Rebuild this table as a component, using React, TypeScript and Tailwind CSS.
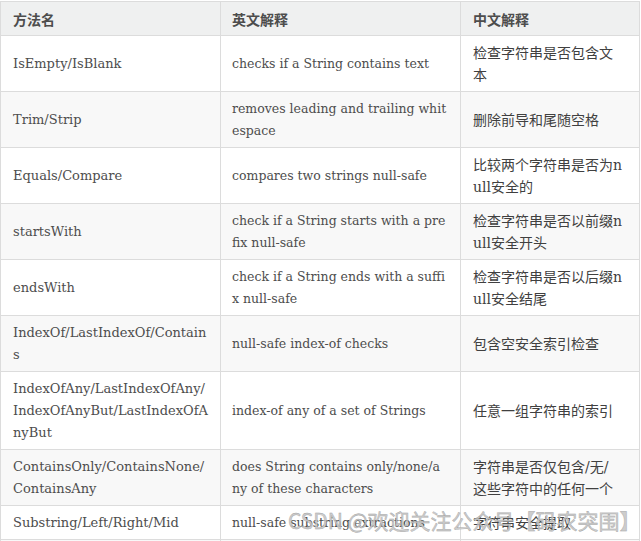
import React from "react";

type Row = { a: string[]; b: string[]; c: string[] };

const rows: Row[] = [
  { a: ["IsEmpty/IsBlank"], b: ["checks if a String contains text"], c: ["检查字符串是否包含文", "本"] },
  { a: ["Trim/Strip"], b: ["removes leading and trailing whit", "espace"], c: ["删除前导和尾随空格"] },
  { a: ["Equals/Compare"], b: ["compares two strings null-safe"], c: ["比较两个字符串是否为n", "ull安全的"] },
  { a: ["startsWith"], b: ["check if a String starts with a pre", "fix null-safe"], c: ["检查字符串是否以前缀n", "ull安全开头"] },
  { a: ["endsWith"], b: ["check if a String ends with a suffi", "x null-safe"], c: ["检查字符串是否以后缀n", "ull安全结尾"] },
  { a: ["IndexOf/LastIndexOf/Contain", "s"], b: ["null-safe index-of checks"], c: ["包含空安全索引检查"] },
  {
    a: ["IndexOfAny/LastIndexOfAny/", "IndexOfAnyBut/LastIndexOfA", "nyBut"],
    b: ["index-of any of a set of Strings"],
    c: ["任意一组字符串的索引"],
  },
  {
    a: ["ContainsOnly/ContainsNone/", "ContainsAny"],
    b: ["does String contains only/none/a", "ny of these characters"],
    c: ["字符串是否仅包含/无/", "这些字符中的任何一个"],
  },
  { a: ["Substring/Left/Right/Mid"], b: ["null-safe substring extractions"], c: ["字符串安全提取"] },
];

const font = { fontFamily: '"DejaVu Serif", "Noto Sans CJK SC", serif' };

function Lines({ lines }: { lines: string[] }) {
  return (
    <>
      {lines.map((l, i) => (
        <div key={i} className="whitespace-nowrap">
          {l}
        </div>
      ))}
    </>
  );
}

export default function App() {
  return (
    <div className="relative h-[541px] w-[641px] overflow-hidden bg-white pt-px">
      <table
        className="w-[639px] table-fixed border-collapse text-[13px] leading-[22px] text-[#4d4d4d]"
        style={font}
      >
        <colgroup>
          <col className="w-[220px]" />
          <col className="w-[240px]" />
          <col className="w-[179px]" />
        </colgroup>
        <thead>
          <tr className="bg-[#eff0f0]">
            {["方法名", "英文解释", "中文解释"].map((h, i) => (
              <th
                key={h}
                className={`border border-[#dcdcdc] pb-[5px] pr-2 pt-[6px] text-left text-[14px] font-semibold text-[#4d4d4d] ${
                  i === 1 ? "pl-[11px]" : "pl-3"
                }`}
                style={{ fontFamily: '"Noto Sans CJK SC", sans-serif' }}
              >
                {h}
              </th>
            ))}
          </tr>
        </thead>
        <tbody>
          {rows.map((r, i) => (
            <tr key={i} className={i % 2 === 1 ? "bg-[#f8f8f8]" : "bg-white"}>
              <td className="border border-[#dcdcdc] pb-[5px] pl-3 pr-2 pt-[6px] align-middle">
                <Lines lines={r.a} />
              </td>
              <td className="border border-[#dcdcdc] pb-[5px] pl-[11px] pr-2 pt-[6px] align-middle text-[12.5px]">
                <Lines lines={r.b} />
              </td>
              <td className="border border-[#dcdcdc] pb-[5px] pl-3 pr-2 pt-[6px] align-middle text-[14px] text-[#404040]">
                <Lines lines={r.c} />
              </td>
            </tr>
          ))}
          <tr className="bg-[#f8f8f8]">
            <td className="h-[34px] border border-[#dcdcdc]" />
            <td className="h-[34px] border border-[#dcdcdc]" />
            <td className="h-[34px] border border-[#dcdcdc]" />
          </tr>
        </tbody>
      </table>
      <div
        className="pointer-events-none absolute left-[288px] top-[506px] whitespace-nowrap text-[21px] leading-[28px] text-[#c8c8c8] opacity-90"
        style={{ fontFamily: '"Noto Sans CJK SC", sans-serif', WebkitTextStroke: "0.4px #9a9a9a" }}
      >
        CSDN @欢迎关注公众号【码农突围】
      </div>
    </div>
  );
}
